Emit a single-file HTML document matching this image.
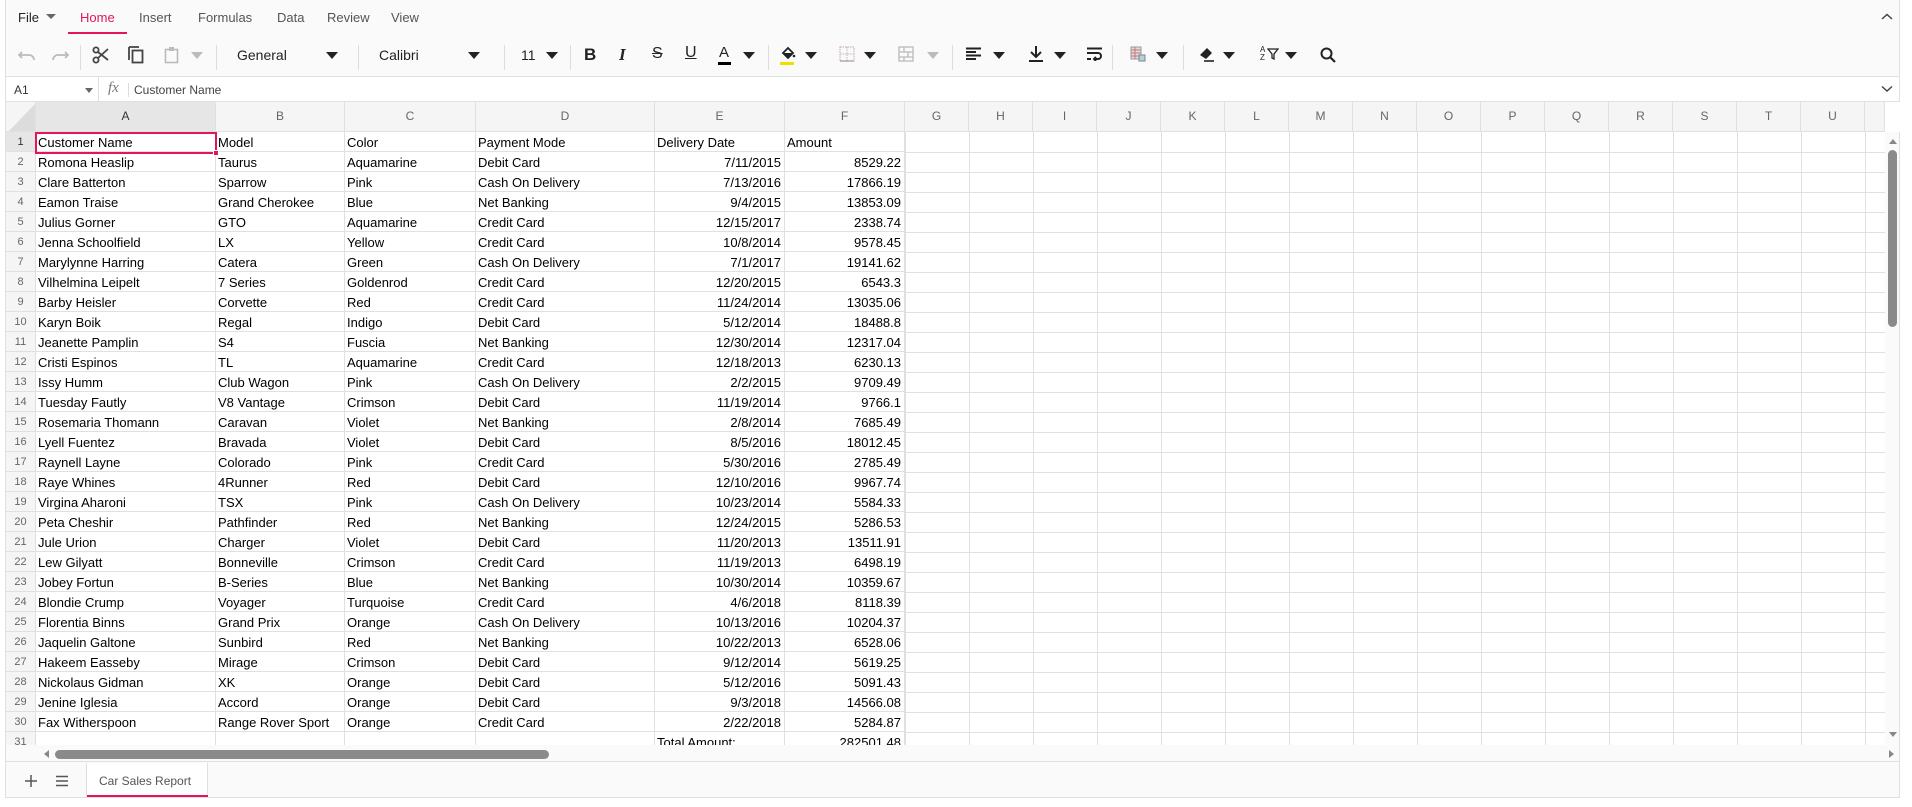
<!DOCTYPE html>
<html><head><meta charset="utf-8"><style>
*{box-sizing:border-box;margin:0;padding:0}
body{width:1912px;height:807px;background:#fff;font-family:"Liberation Sans",sans-serif;position:relative;overflow:hidden}
.abs{position:absolute}
#top{left:5px;top:0;width:1895px;height:77px;background:#fafafa;border-left:1px solid #e0e0e0;border-right:1px solid #e0e0e0;border-bottom:1px solid #e0e0e0}
.menu{position:absolute;top:10px;font-size:13px;color:#555}
.sep{position:absolute;top:45px;width:1px;height:25px;background:#ddd}
.ic{position:absolute;top:46px}
.dd{position:absolute;top:52px;width:0;height:0;border-left:6px solid transparent;border-right:6px solid transparent;border-top:7px solid #222}
.tt{position:absolute;top:47px;font-size:14px;color:#222}
#fbar{left:5px;top:77px;width:1895px;height:25px;background:#fff;border-left:1px solid #e0e0e0;border-right:1px solid #e0e0e0;border-bottom:1px solid #e0e0e0}
#grid{left:5px;top:102px;width:1880px;height:643px;overflow:hidden;background-color:#fff;
background-image:linear-gradient(to right,transparent 63px,#e0e0e0 63px,#e0e0e0 64px);background-size:64px 100%;background-position:900px 0;background-repeat:repeat-x;border-left:1px solid #e0e0e0}
.r{display:flex;height:20px;font-size:13px;color:#000;line-height:21px}
.r::after{content:"";flex:1;height:20px;border-bottom:1px solid #e0e0e0}
.r>*{display:block;height:20px;border-right:1px solid #e0e0e0;border-bottom:1px solid #e0e0e0;background:#fff;overflow:hidden;white-space:nowrap;padding-left:2px;font-style:normal;font-weight:normal;text-decoration:none}
.r>i{width:30px;background:#f5f5f5;color:#666;font-size:11px;text-align:center;padding:0}
.r>*:nth-child(2){width:180px}
.r>*:nth-child(3){width:129px}
.r>*:nth-child(4){width:131px}
.r>*:nth-child(5){width:179px}
.r>*:nth-child(6){width:130px;text-align:right;padding-right:3px}
.r>*:nth-child(7){width:120px;text-align:right;padding-right:3px}
#grid .hr{height:30px;line-height:29px;font-size:12px;color:#666;text-align:center}
#grid .hr::after{display:none}
.hr>*{height:30px!important;background:#f5f5f5!important;text-align:center!important;padding:0!important}
#vs{left:1885px;top:132px;width:15px;height:613px;background:#fafafa;border-right:1px solid #e0e0e0}
#hs{left:5px;top:745px;width:1895px;height:17px;background:#fafafa;border:1px solid #e0e0e0;border-top:0}
#tabs{left:5px;top:762px;width:1895px;height:36px;background:#fafafa;border:1px solid #e0e0e0;border-top:0}
</style></head><body>
<div id="top" class="abs"></div>
<div class="menu" style="left:18px;color:#222">File</div>
<div class="dd" style="left:46px;top:14px;border-left-width:5px;border-right-width:5px;border-top-width:5px;border-top-color:#666"></div>
<div class="menu" style="left:80px;color:#e3165b">Home</div>
<div class="abs" style="left:68px;top:32px;width:59px;height:2px;background:#e3165b"></div>
<div class="menu" style="left:139px">Insert</div>
<div class="menu" style="left:198px">Formulas</div>
<div class="menu" style="left:277px">Data</div>
<div class="menu" style="left:327px">Review</div>
<div class="menu" style="left:391px">View</div>
<svg class="abs" style="left:1881px;top:13px" width="12" height="8"><path d="M1 6 L6 1.5 L11 6" stroke="#444" stroke-width="1.5" fill="none"/></svg>

<svg class="ic" style="left:18px;top:49px" width="18" height="12"><path d="M4 3 L1 6 L4 9 M1.5 6 H11 A5 5 0 0 1 16 11" stroke="#bbb" stroke-width="1.8" fill="none"/></svg>
<svg class="ic" style="left:51px;top:49px" width="18" height="12"><path d="M14 3 L17 6 L14 9 M16.5 6 H7 A5 5 0 0 0 2 11" stroke="#bbb" stroke-width="1.8" fill="none"/></svg>
<div class="sep" style="left:80px"></div>
<svg class="ic" style="left:92px;top:46px" width="18" height="18"><circle cx="4" cy="4" r="2.6" stroke="#444" stroke-width="1.8" fill="none"/><circle cx="4" cy="14" r="2.6" stroke="#444" stroke-width="1.8" fill="none"/><path d="M6 6 L16 14 M6 12 L16 3" stroke="#444" stroke-width="1.8"/></svg>
<svg class="ic" style="left:127px;top:46px" width="18" height="18"><path d="M2 1 H12 M2 1 V14" stroke="#444" stroke-width="1.8" fill="none"/><rect x="5.5" y="4.5" width="10" height="12" stroke="#444" stroke-width="1.8" fill="none"/></svg>
<svg class="ic" style="left:164px;top:46px" width="16" height="18"><rect x="1.5" y="3.5" width="12" height="13" stroke="#bbb" stroke-width="1.6" fill="none"/><rect x="5" y="1" width="5" height="4" fill="#bbb"/></svg>
<div class="dd" style="left:191px;border-top-color:#bbb"></div>
<div class="sep" style="left:216px"></div>
<div class="tt" style="left:237px">General</div>
<div class="dd" style="left:326px"></div>
<div class="sep" style="left:358px"></div>
<div class="tt" style="left:379px">Calibri</div>
<div class="dd" style="left:468px"></div>
<div class="sep" style="left:504px"></div>
<div class="tt" style="left:521px">11</div>
<div class="dd" style="left:546px"></div>
<div class="sep" style="left:570px"></div>
<div class="tt" style="left:584px;font-weight:bold;font-size:17px;top:45px">B</div>
<div class="tt" style="left:619px;font-style:italic;font-size:17px;top:45px;font-family:'Liberation Serif',serif;font-weight:bold">I</div>
<div class="tt" style="left:652px;font-size:16px;top:45px;text-decoration:line-through">S</div>
<div class="tt" style="left:685px;font-size:16px;top:44px;text-decoration:underline">U</div>
<div class="tt" style="left:719px;font-size:15px;top:44px">A</div>
<div class="abs" style="left:718px;top:62px;width:13px;height:3px;background:#000"></div>
<div class="dd" style="left:743px"></div>
<div class="sep" style="left:768px"></div>
<svg class="ic" style="left:780px;top:45px" width="16" height="16"><path d="M3 8 L8 3 L13 8 L8 13 Z" stroke="#222" stroke-width="1.8" fill="none"/><path d="M3 8 L13 8 L8 13 Z" fill="#222"/><circle cx="14" cy="11" r="1.3" fill="#222"/></svg>
<div class="abs" style="left:780px;top:62px;width:14px;height:3px;background:#f0e000"></div>
<div class="dd" style="left:805px"></div>
<svg class="ic" style="left:839px;top:46px" width="16" height="16"><rect x="1" y="1" width="14" height="14" stroke="#c8a0a0" stroke-dasharray="1.5 1" fill="none"/><path d="M8 1 V15 M1 8 H15" stroke="#bbb" stroke-dasharray="1.5 1"/><path d="M1 15 H15" stroke="#888"/></svg>
<div class="dd" style="left:864px"></div>
<svg class="ic" style="left:898px;top:46px" width="16" height="16"><rect x="1" y="1" width="14" height="14" stroke="#bbb" stroke-width="1.3" fill="none"/><path d="M1 6 H15 M1 11 H15 M6 1 V6 M10 6 V11 M6 11 V15" stroke="#bbb" stroke-width="1.3"/></svg>
<div class="dd" style="left:927px;border-top-color:#bbb"></div>
<div class="sep" style="left:952px"></div>
<svg class="ic" style="left:966px;top:47px" width="16" height="14"><path d="M0 1.5 H15 M0 5 H10 M0 8.5 H15 M0 12 H10" stroke="#222" stroke-width="2"/></svg>
<div class="dd" style="left:993px"></div>
<svg class="ic" style="left:1028px;top:45px" width="16" height="18"><path d="M8 1 V12 M3 7 L8 12 L13 7" stroke="#222" stroke-width="2" fill="none"/><path d="M1 16 H15" stroke="#222" stroke-width="2"/></svg>
<div class="dd" style="left:1054px"></div>
<svg class="ic" style="left:1087px;top:47px" width="16" height="14"><path d="M0 1.5 H15 M0 6 H11 A3 3 0 0 1 11 12 H7 M9 10 L7 12 L9 14 M0 12 H4" stroke="#222" stroke-width="2" fill="none"/></svg>
<div class="sep" style="left:1112px"></div>
<svg class="ic" style="left:1130px;top:46px" width="16" height="16"><rect x="1" y="1" width="10" height="12" fill="#ddd" stroke="#999"/><path d="M1 4 H11 M1 7 H11 M1 10 H11 M5 1 V13" stroke="#c77"/><rect x="9" y="9" width="6" height="6" fill="#bcd" stroke="#789"/></svg>
<div class="dd" style="left:1156px"></div>
<div class="sep" style="left:1183px"></div>
<svg class="ic" style="left:1198px;top:45px" width="18" height="18"><path d="M2 10 L9 3 L14 8 L8 14 Z" fill="#222"/><path d="M6 16 H16" stroke="#222" stroke-width="1.6"/></svg>
<div class="dd" style="left:1223px"></div>
<div class="abs" style="left:1260px;top:46px;font-size:8px;line-height:8px;color:#222">A<br>Z</div>
<svg class="ic" style="left:1267px;top:48px" width="12" height="12"><path d="M1 1 H11 L7 6 V11 L5 10 V6 Z" stroke="#222" stroke-width="1.3" fill="none"/></svg>
<div class="dd" style="left:1285px"></div>
<svg class="ic" style="left:1320px;top:47px" width="16" height="16"><circle cx="6.5" cy="6.5" r="5" stroke="#222" stroke-width="2" fill="none"/><path d="M10 10 L15 15" stroke="#222" stroke-width="2.2"/></svg>

<div id="fbar" class="abs"></div>
<div class="abs" style="left:14px;top:83px;font-size:12px;color:#333">A1</div>
<div class="dd" style="left:85px;top:88px;border-left-width:4px;border-right-width:4px;border-top-width:5px;border-top-color:#666"></div>
<div class="abs" style="left:98px;top:77px;width:1px;height:24px;background:#e0e0e0"></div>
<div class="abs" style="left:108px;top:80px;font-size:15px;color:#777;font-style:italic;font-family:'Liberation Serif',serif">fx</div>
<div class="abs" style="left:128px;top:83px;width:1px;height:14px;background:#ddd"></div>
<div class="abs" style="left:134px;top:83px;font-size:12px;color:#444">Customer Name</div>
<svg class="abs" style="left:1881px;top:85px" width="12" height="8"><path d="M1 1.5 L6 6 L11 1.5" stroke="#444" stroke-width="1.5" fill="none"/></svg>

<div id="grid" class="abs">
<div class="r hr"><i style="background:#f5f5f5;position:relative"><svg width="28" height="28" style="position:absolute;left:2px;top:1px"><path d="M27 1 V28 H1 Z" fill="#dcdcdc"/></svg></i><b style="background:#e6e6e6!important;color:#333">A</b><b>B</b><b>C</b><b>D</b><b>E</b><b>F</b><b style="width:64px">G</b><b style="width:64px">H</b><b style="width:64px">I</b><b style="width:64px">J</b><b style="width:64px">K</b><b style="width:64px">L</b><b style="width:64px">M</b><b style="width:64px">N</b><b style="width:64px">O</b><b style="width:64px">P</b><b style="width:64px">Q</b><b style="width:64px">R</b><b style="width:64px">S</b><b style="width:64px">T</b><b style="width:64px">U</b><b style="width:20px"></b></div>
<div class="r"><i style="background:#e6e6e6;color:#333">1</i><b>Customer Name</b><b>Model</b><b>Color</b><b>Payment Mode</b><b style="text-align:left;padding-left:2px">Delivery Date</b><b style="text-align:left;padding-left:2px">Amount</b></div>
<div class="r"><i>2</i><b>Romona Heaslip</b><b>Taurus</b><b>Aquamarine</b><b>Debit Card</b><b>7/11/2015</b><b>8529.22</b></div>
<div class="r"><i>3</i><b>Clare Batterton</b><b>Sparrow</b><b>Pink</b><b>Cash On Delivery</b><b>7/13/2016</b><b>17866.19</b></div>
<div class="r"><i>4</i><b>Eamon Traise</b><b>Grand Cherokee</b><b>Blue</b><b>Net Banking</b><b>9/4/2015</b><b>13853.09</b></div>
<div class="r"><i>5</i><b>Julius Gorner</b><b>GTO</b><b>Aquamarine</b><b>Credit Card</b><b>12/15/2017</b><b>2338.74</b></div>
<div class="r"><i>6</i><b>Jenna Schoolfield</b><b>LX</b><b>Yellow</b><b>Credit Card</b><b>10/8/2014</b><b>9578.45</b></div>
<div class="r"><i>7</i><b>Marylynne Harring</b><b>Catera</b><b>Green</b><b>Cash On Delivery</b><b>7/1/2017</b><b>19141.62</b></div>
<div class="r"><i>8</i><b>Vilhelmina Leipelt</b><b>7 Series</b><b>Goldenrod</b><b>Credit Card</b><b>12/20/2015</b><b>6543.3</b></div>
<div class="r"><i>9</i><b>Barby Heisler</b><b>Corvette</b><b>Red</b><b>Credit Card</b><b>11/24/2014</b><b>13035.06</b></div>
<div class="r"><i>10</i><b>Karyn Boik</b><b>Regal</b><b>Indigo</b><b>Debit Card</b><b>5/12/2014</b><b>18488.8</b></div>
<div class="r"><i>11</i><b>Jeanette Pamplin</b><b>S4</b><b>Fuscia</b><b>Net Banking</b><b>12/30/2014</b><b>12317.04</b></div>
<div class="r"><i>12</i><b>Cristi Espinos</b><b>TL</b><b>Aquamarine</b><b>Credit Card</b><b>12/18/2013</b><b>6230.13</b></div>
<div class="r"><i>13</i><b>Issy Humm</b><b>Club Wagon</b><b>Pink</b><b>Cash On Delivery</b><b>2/2/2015</b><b>9709.49</b></div>
<div class="r"><i>14</i><b>Tuesday Fautly</b><b>V8 Vantage</b><b>Crimson</b><b>Debit Card</b><b>11/19/2014</b><b>9766.1</b></div>
<div class="r"><i>15</i><b>Rosemaria Thomann</b><b>Caravan</b><b>Violet</b><b>Net Banking</b><b>2/8/2014</b><b>7685.49</b></div>
<div class="r"><i>16</i><b>Lyell Fuentez</b><b>Bravada</b><b>Violet</b><b>Debit Card</b><b>8/5/2016</b><b>18012.45</b></div>
<div class="r"><i>17</i><b>Raynell Layne</b><b>Colorado</b><b>Pink</b><b>Credit Card</b><b>5/30/2016</b><b>2785.49</b></div>
<div class="r"><i>18</i><b>Raye Whines</b><b>4Runner</b><b>Red</b><b>Debit Card</b><b>12/10/2016</b><b>9967.74</b></div>
<div class="r"><i>19</i><b>Virgina Aharoni</b><b>TSX</b><b>Pink</b><b>Cash On Delivery</b><b>10/23/2014</b><b>5584.33</b></div>
<div class="r"><i>20</i><b>Peta Cheshir</b><b>Pathfinder</b><b>Red</b><b>Net Banking</b><b>12/24/2015</b><b>5286.53</b></div>
<div class="r"><i>21</i><b>Jule Urion</b><b>Charger</b><b>Violet</b><b>Debit Card</b><b>11/20/2013</b><b>13511.91</b></div>
<div class="r"><i>22</i><b>Lew Gilyatt</b><b>Bonneville</b><b>Crimson</b><b>Credit Card</b><b>11/19/2013</b><b>6498.19</b></div>
<div class="r"><i>23</i><b>Jobey Fortun</b><b>B-Series</b><b>Blue</b><b>Net Banking</b><b>10/30/2014</b><b>10359.67</b></div>
<div class="r"><i>24</i><b>Blondie Crump</b><b>Voyager</b><b>Turquoise</b><b>Credit Card</b><b>4/6/2018</b><b>8118.39</b></div>
<div class="r"><i>25</i><b>Florentia Binns</b><b>Grand Prix</b><b>Orange</b><b>Cash On Delivery</b><b>10/13/2016</b><b>10204.37</b></div>
<div class="r"><i>26</i><b>Jaquelin Galtone</b><b>Sunbird</b><b>Red</b><b>Net Banking</b><b>10/22/2013</b><b>6528.06</b></div>
<div class="r"><i>27</i><b>Hakeem Easseby</b><b>Mirage</b><b>Crimson</b><b>Debit Card</b><b>9/12/2014</b><b>5619.25</b></div>
<div class="r"><i>28</i><b>Nickolaus Gidman</b><b>XK</b><b>Orange</b><b>Debit Card</b><b>5/12/2016</b><b>5091.43</b></div>
<div class="r"><i>29</i><b>Jenine Iglesia</b><b>Accord</b><b>Orange</b><b>Debit Card</b><b>9/3/2018</b><b>14566.08</b></div>
<div class="r"><i>30</i><b>Fax Witherspoon</b><b>Range Rover Sport</b><b>Orange</b><b>Credit Card</b><b>2/22/2018</b><b>5284.87</b></div>
<div class="r"><i>31</i><b></b><b></b><b></b><b></b><b style="text-align:left;padding-left:2px">Total Amount:</b><b>282501.48</b></div>
</div>
<div class="abs" style="left:35px;top:132px;width:182px;height:22px;border:2px solid #e3165b"></div>
<div class="abs" style="left:213px;top:150px;width:6px;height:6px;background:#e3165b;border:1px solid #fff"></div>
<div id="vs" class="abs"></div>
<svg class="abs" style="left:1888px;top:137px" width="10" height="8"><path d="M1 7 L5 2 L9 7 Z" fill="#888"/></svg>
<div class="abs" style="left:1888px;top:150px;width:9px;height:177px;background:#8a8a8a;border-radius:5px"></div>
<svg class="abs" style="left:1888px;top:731px" width="10" height="8"><path d="M1 1 L5 6 L9 1 Z" fill="#888"/></svg>
<div id="hs" class="abs"></div>
<svg class="abs" style="left:42px;top:749px" width="8" height="10"><path d="M7 1 L2 5 L7 9 Z" fill="#888"/></svg>
<div class="abs" style="left:55px;top:750px;width:494px;height:9px;background:#8a8a8a;border-radius:5px"></div>
<svg class="abs" style="left:1888px;top:749px" width="8" height="10"><path d="M1 1 L6 5 L1 9 Z" fill="#888"/></svg>
<div id="tabs" class="abs"></div>
<svg class="abs" style="left:24px;top:774px" width="14" height="14"><path d="M7 1 V13 M1 7 H13" stroke="#555" stroke-width="1.5"/></svg>
<svg class="abs" style="left:55px;top:775px" width="14" height="12"><path d="M1 1.5 H13 M1 6 H13 M1 10.5 H13" stroke="#555" stroke-width="1.4"/></svg>
<div class="abs" style="left:86px;top:763px;width:122px;height:34px;background:#fff;border-left:1px solid #e0e0e0;border-right:1px solid #e0e0e0"></div>
<div class="abs" style="left:99px;top:774px;font-size:12px;color:#555">Car Sales Report</div>
<div class="abs" style="left:87px;top:795px;width:121px;height:2px;background:#e3165b"></div>
</body></html>
